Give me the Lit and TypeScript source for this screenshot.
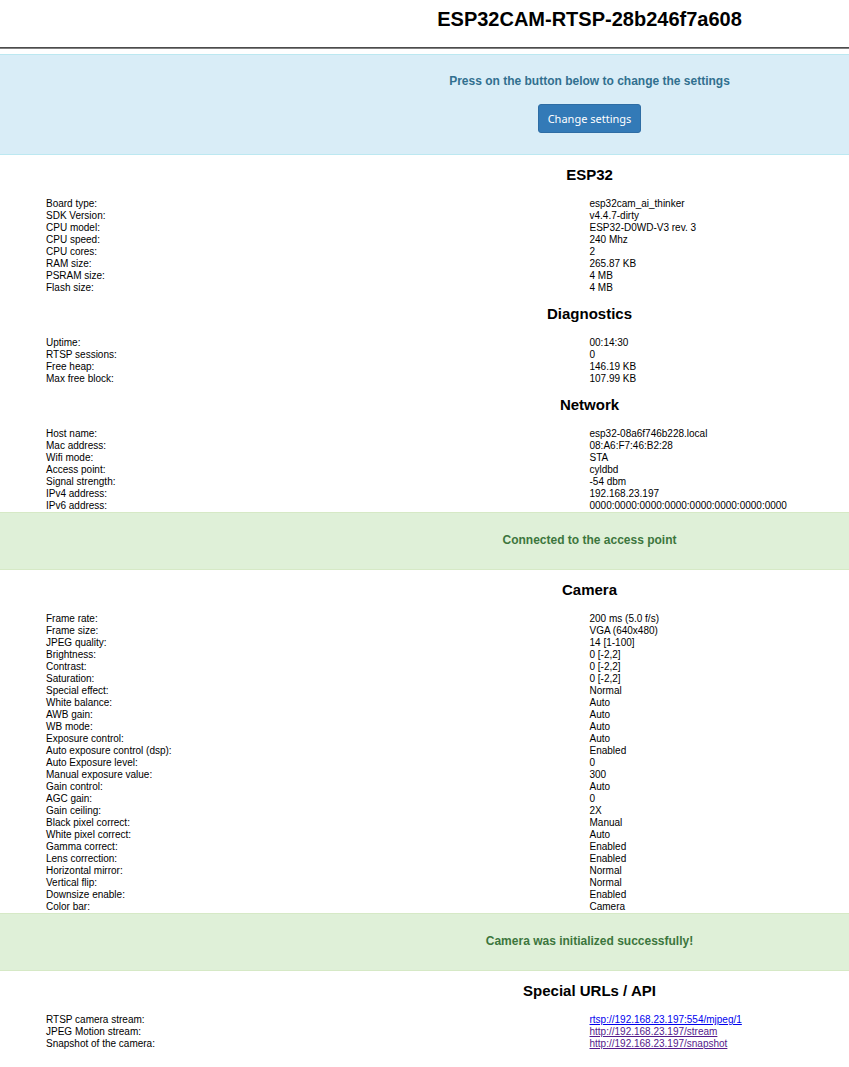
import { LitElement, html, css } from "lit";
import { customElement } from "lit/decorators.js";

interface Entry {
  label: string;
  value: string;
  link?: "fresh" | "seen";
}

const entry = (label: string, value: string, link?: "fresh" | "seen"): Entry => ({ label, value, link });

const board: Entry[] = [
  entry("Board type:", "esp32cam_ai_thinker"),
  entry("SDK Version:", "v4.4.7-dirty"),
  entry("CPU model:", "ESP32-D0WD-V3 rev. 3"),
  entry("CPU speed:", "240 Mhz"),
  entry("CPU cores:", "2"),
  entry("RAM size:", "265.87 KB"),
  entry("PSRAM size:", "4 MB"),
  entry("Flash size:", "4 MB"),
];

const diagnostics: Entry[] = [
  entry("Uptime:", "00:14:30"),
  entry("RTSP sessions:", "0"),
  entry("Free heap:", "146.19 KB"),
  entry("Max free block:", "107.99 KB"),
];

const network: Entry[] = [
  entry("Host name:", "esp32-08a6f746b228.local"),
  entry("Mac address:", "08:A6:F7:46:B2:28"),
  entry("Wifi mode:", "STA"),
  entry("Access point:", "cyldbd"),
  entry("Signal strength:", "-54 dbm"),
  entry("IPv4 address:", "192.168.23.197"),
  entry("IPv6 address:", "0000:0000:0000:0000:0000:0000:0000:0000"),
];

const camera: Entry[] = [
  entry("Frame rate:", "200 ms (5.0 f/s)"),
  entry("Frame size:", "VGA (640x480)"),
  entry("JPEG quality:", "14 [1-100]"),
  entry("Brightness:", "0 [-2,2]"),
  entry("Contrast:", "0 [-2,2]"),
  entry("Saturation:", "0 [-2,2]"),
  entry("Special effect:", "Normal"),
  entry("White balance:", "Auto"),
  entry("AWB gain:", "Auto"),
  entry("WB mode:", "Auto"),
  entry("Exposure control:", "Auto"),
  entry("Auto exposure control (dsp):", "Enabled"),
  entry("Auto Exposure level:", "0"),
  entry("Manual exposure value:", "300"),
  entry("Gain control:", "Auto"),
  entry("AGC gain:", "0"),
  entry("Gain ceiling:", "2X"),
  entry("Black pixel correct:", "Manual"),
  entry("White pixel correct:", "Auto"),
  entry("Gamma correct:", "Enabled"),
  entry("Lens correction:", "Enabled"),
  entry("Horizontal mirror:", "Normal"),
  entry("Vertical flip:", "Normal"),
  entry("Downsize enable:", "Enabled"),
  entry("Color bar:", "Camera"),
];

const urls: Entry[] = [
  entry("RTSP camera stream:", "rtsp://192.168.23.197:554/mjpeg/1", "fresh"),
  entry("JPEG Motion stream:", "http://192.168.23.197/stream", "seen"),
  entry("Snapshot of the camera:", "http://192.168.23.197/snapshot", "seen"),
];

@customElement("app-root")
export class AppRoot extends LitElement {
  static styles = css`
    :host {
      display: block;
      overflow-x: clip;
      background: #fff;
      color: #000;
      font: 10px/12px "Liberation Sans", Arial, sans-serif;
    }
    /* The status page is a wide two-column sheet; narrow windows show its left part. */
    .page {
      min-width: 1179px;
      padding-bottom: 16px;
    }
    .title {
      margin: 0;
      padding: 8px 0 16px;
      font-size: 20px;
      line-height: 23px;
      text-align: center;
    }
    .rule {
      height: 0;
      margin: 0 0 5px;
      border: 0;
      border-top: 1px solid #4c4c4c;
      border-bottom: 1px solid #808080;
    }
    .alert {
      display: flex;
      flex-direction: column;
      align-items: center;
      gap: 16px;
      padding: 20px 0 22px;
      border: solid;
      border-width: 1px 0;
      font-size: 12px;
      line-height: 14px;
      font-weight: bold;
    }
    .alert p {
      margin: 0;
    }
    .info {
      padding: 19px 0 21px;
      background: #d9edf7;
      border-color: #bce8f1;
      color: #31708f;
    }
    .success {
      background: #dff0d8;
      border-color: #d6e9c6;
      color: #3c763d;
    }
    .button {
      padding: 6px 9px;
      border: 1px solid #2e6da4;
      border-radius: 3px;
      background: #337ab7;
      color: #fff;
      font: 11px/15px "Noto Sans", sans-serif;
      cursor: pointer;
    }
    .heading {
      margin: 0;
      padding: 11px 0 15px;
      font-size: 15px;
      line-height: 17px;
      text-align: center;
    }
    .entries {
      margin: 0;
      padding: 0 46px;
    }
    .entry {
      display: grid;
      grid-template-columns: 1fr 1fr;
    }
    .entry dd {
      margin: 0;
    }
    .fresh {
      color: #0000ee;
    }
    .seen {
      color: #551a8b;
    }
  `;

  private section(title: string, entries: Entry[]) {
    return html`
      <section>
        <h2 class="heading">${title}</h2>
        <dl class="entries">
          ${entries.map(
            (e) => html`<div class="entry">
              <dt>${e.label}</dt>
              <dd>${e.link ? html`<a class=${e.link} href=${e.value}>${e.value}</a>` : e.value}</dd>
            </div>`
          )}
        </dl>
      </section>
    `;
  }

  render() {
    return html`
      <main class="page">
        <h1 class="title">ESP32CAM-RTSP-28b246f7a608</h1>
        <hr class="rule" />
        <div class="alert info">
          <p>Press on the button below to change the settings</p>
          <button class="button" type="button">Change settings</button>
        </div>
        ${this.section("ESP32", board)}
        ${this.section("Diagnostics", diagnostics)}
        ${this.section("Network", network)}
        <div class="alert success"><p>Connected to the access point</p></div>
        ${this.section("Camera", camera)}
        <div class="alert success"><p>Camera was initialized successfully!</p></div>
        ${this.section("Special URLs / API", urls)}
      </main>
    `;
  }
}
